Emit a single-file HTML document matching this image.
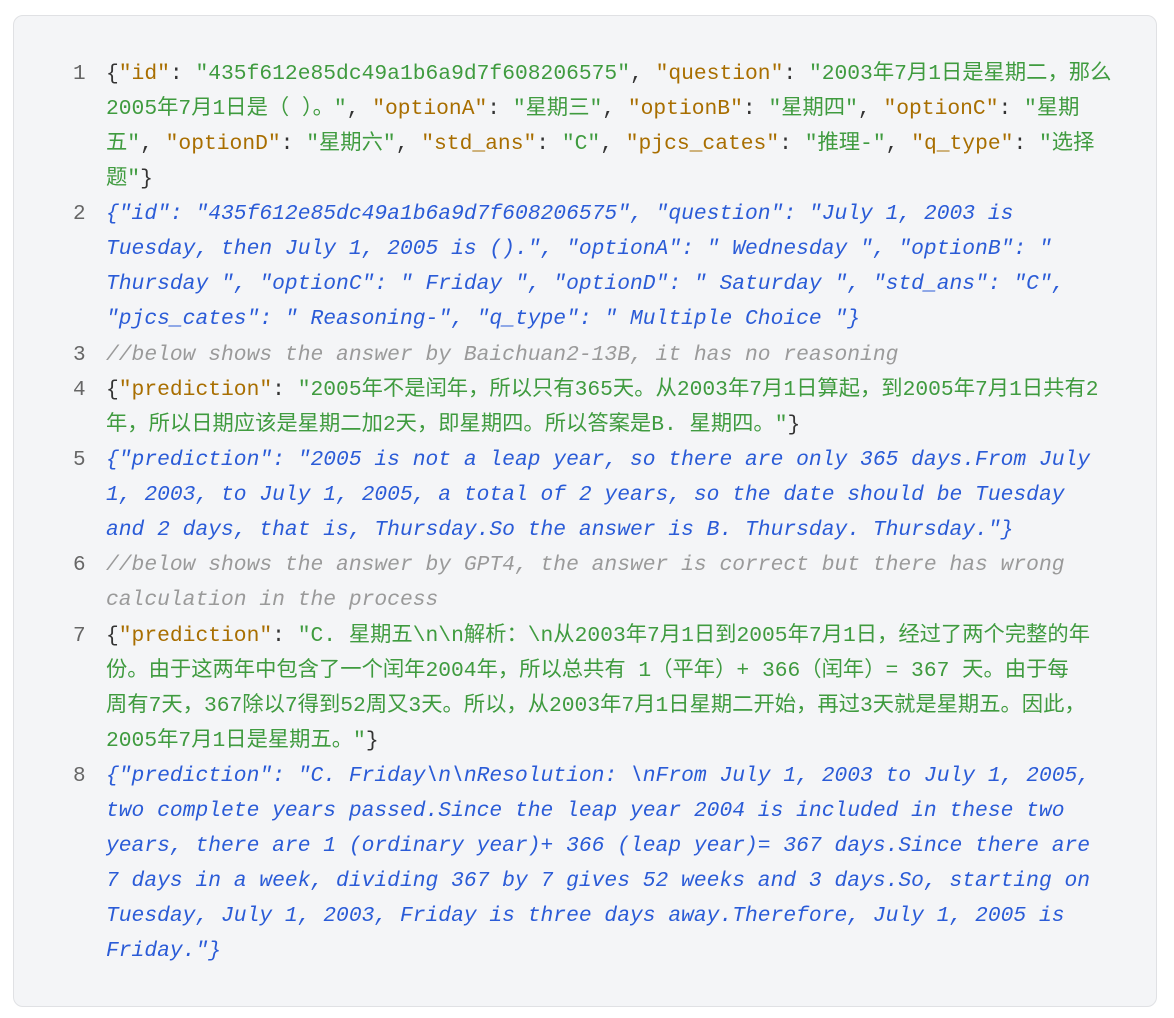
<!DOCTYPE html>
<html><head><meta charset="utf-8"><style>
html,body{margin:0;padding:0;background:#fff;width:1174px;height:1018px;overflow:hidden}
.box{position:absolute;left:13px;top:15px;width:1144px;height:992px;background:#f4f5f7;border:1px solid #e0e1e4;border-radius:10px;box-sizing:border-box}
.l{position:absolute;left:106px;white-space:pre;font-family:"Liberation Mono","Noto Sans CJK SC",monospace;font-size:21.3px;line-height:35px;color:#333}
.n{position:absolute;left:73px;font-family:"Liberation Mono",monospace;font-size:21px;line-height:35px;color:#666}
.k{color:#a86e00}.s{color:#3f9b3f}.i{color:#2a5bd7;font-style:italic}.c{color:#9a9a9a;font-style:italic}
</style></head><body><div class="box"></div>
<div class="n" style="top:57px">1</div>
<div class="l" style="top:57px">{<span class="k">"id"</span>: <span class="s">"435f612e85dc49a1b6a9d7f608206575"</span>, <span class="k">"question"</span>: <span class="s">"2003年7月1日是星期二，那么</span></div>
<div class="l" style="top:92px"><span class="s">2005年7月1日是（ ）。"</span>, <span class="k">"optionA"</span>: <span class="s">"星期三"</span>, <span class="k">"optionB"</span>: <span class="s">"星期四"</span>, <span class="k">"optionC"</span>: <span class="s">"星期</span></div>
<div class="l" style="top:127px"><span class="s">五"</span>, <span class="k">"optionD"</span>: <span class="s">"星期六"</span>, <span class="k">"std_ans"</span>: <span class="s">"C"</span>, <span class="k">"pjcs_cates"</span>: <span class="s">"推理-"</span>, <span class="k">"q_type"</span>: <span class="s">"选择</span></div>
<div class="l" style="top:162px"><span class="s">题"</span>}</div>
<div class="n" style="top:197px">2</div>
<div class="l i" style="top:197px">{"id": "435f612e85dc49a1b6a9d7f608206575", "question": "July 1, 2003 is</div>
<div class="l i" style="top:232px">Tuesday, then July 1, 2005 is ().", "optionA": " Wednesday ", "optionB": "</div>
<div class="l i" style="top:267px">Thursday ", "optionC": " Friday ", "optionD": " Saturday ", "std_ans": "C",</div>
<div class="l i" style="top:302px">"pjcs_cates": " Reasoning-", "q_type": " Multiple Choice "}</div>
<div class="n" style="top:338px">3</div>
<div class="l c" style="top:338px">//below shows the answer by Baichuan2-13B, it has no reasoning</div>
<div class="n" style="top:373px">4</div>
<div class="l" style="top:373px">{<span class="k">"prediction"</span>: <span class="s">"2005年不是闰年，所以只有365天。从2003年7月1日算起，到2005年7月1日共有2</span></div>
<div class="l" style="top:408px"><span class="s">年，所以日期应该是星期二加2天，即星期四。所以答案是B. 星期四。"</span>}</div>
<div class="n" style="top:443px">5</div>
<div class="l i" style="top:443px">{"prediction": "2005 is not a leap year, so there are only 365 days.From July</div>
<div class="l i" style="top:478px">1, 2003, to July 1, 2005, a total of 2 years, so the date should be Tuesday</div>
<div class="l i" style="top:513px">and 2 days, that is, Thursday.So the answer is B. Thursday. Thursday."}</div>
<div class="n" style="top:548px">6</div>
<div class="l c" style="top:548px">//below shows the answer by GPT4, the answer is correct but there has wrong</div>
<div class="l c" style="top:583px">calculation in the process</div>
<div class="n" style="top:619px">7</div>
<div class="l" style="top:619px">{<span class="k">"prediction"</span>: <span class="s">"C. 星期五\n\n解析：\n从2003年7月1日到2005年7月1日，经过了两个完整的年</span></div>
<div class="l" style="top:654px"><span class="s">份。由于这两年中包含了一个闰年2004年，所以总共有 1（平年）+ 366（闰年）= 367 天。由于每</span></div>
<div class="l" style="top:689px"><span class="s">周有7天，367除以7得到52周又3天。所以，从2003年7月1日星期二开始，再过3天就是星期五。因此，</span></div>
<div class="l" style="top:724px"><span class="s">2005年7月1日是星期五。"</span>}</div>
<div class="n" style="top:759px">8</div>
<div class="l i" style="top:759px">{"prediction": "C. Friday\n\nResolution: \nFrom July 1, 2003 to July 1, 2005,</div>
<div class="l i" style="top:794px">two complete years passed.Since the leap year 2004 is included in these two</div>
<div class="l i" style="top:829px">years, there are 1 (ordinary year)+ 366 (leap year)= 367 days.Since there are</div>
<div class="l i" style="top:864px">7 days in a week, dividing 367 by 7 gives 52 weeks and 3 days.So, starting on</div>
<div class="l i" style="top:899px">Tuesday, July 1, 2003, Friday is three days away.Therefore, July 1, 2005 is</div>
<div class="l i" style="top:934px">Friday."}</div>
</body></html>
